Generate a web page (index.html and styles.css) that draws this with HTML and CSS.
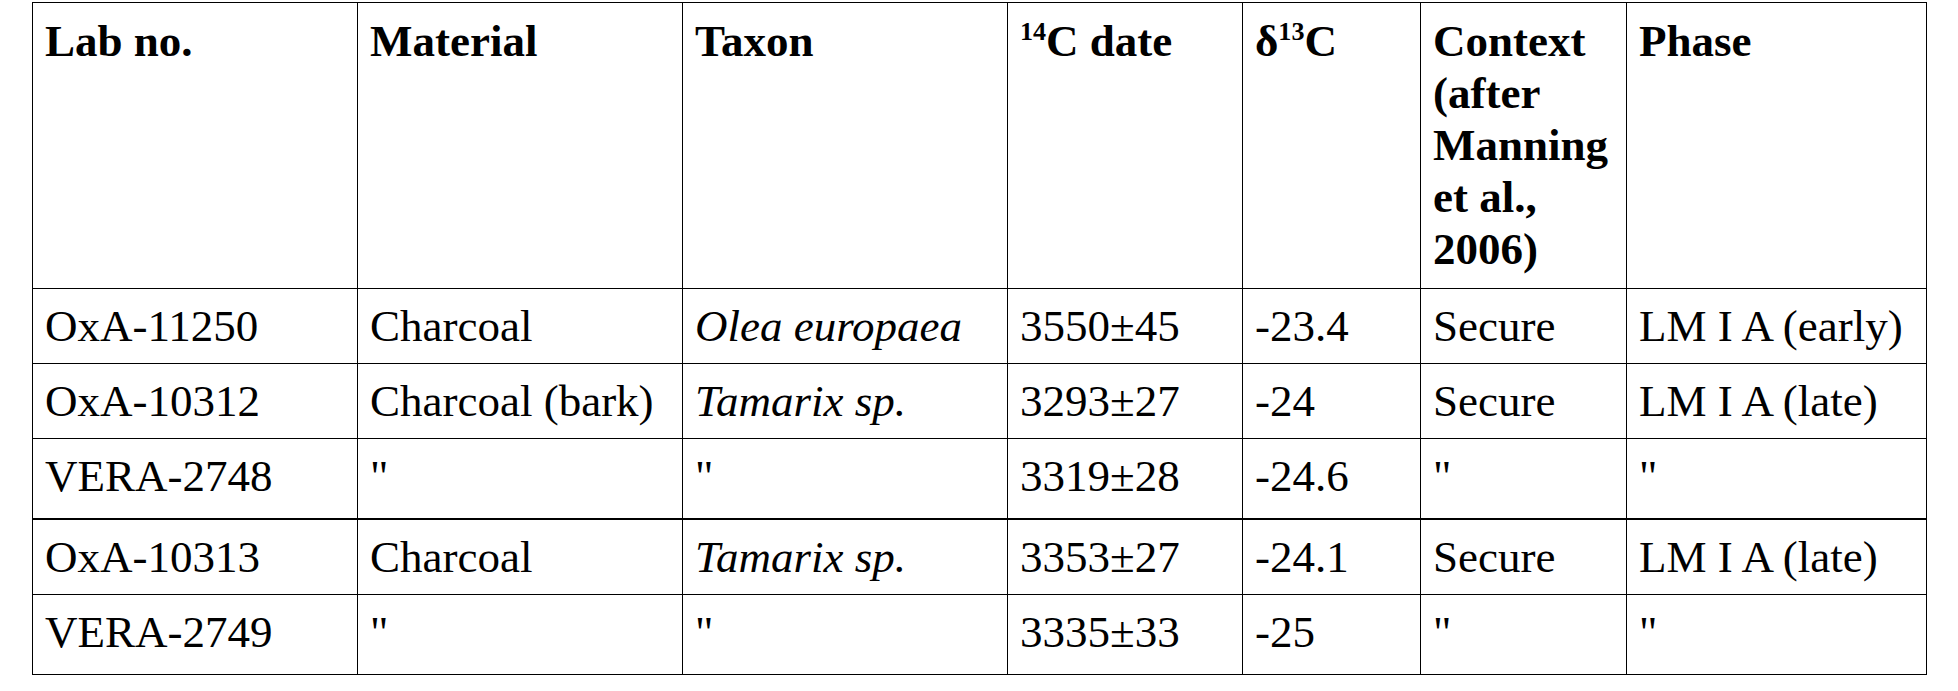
FILE: index.html
```html
<!DOCTYPE html>
<html lang="en">
<head>
    <meta charset="UTF-8">
    <meta name="viewport" content="width=device-width, initial-scale=1.0">
    <title>Radiocarbon dates</title>
    <link rel="stylesheet" href="styles.css">
</head>
<body>
    <div class="page">
        <table class="dates">
            <colgroup>
                <col class="col-lab">
                <col class="col-material">
                <col class="col-taxon">
                <col class="col-date">
                <col class="col-delta">
                <col class="col-context">
                <col class="col-phase">
            </colgroup>
            <thead>
                <tr>
                    <th>Lab no.</th>
                    <th>Material</th>
                    <th>Taxon</th>
                    <th><sup>14</sup>C date</th>
                    <th>&delta;<sup>13</sup>C</th>
                    <th>Context (after Manning et al., 2006)</th>
                    <th>Phase</th>
                </tr>
            </thead>
            <tbody>
                <tr>
                    <td>OxA-11250</td>
                    <td>Charcoal</td>
                    <td><i>Olea europaea</i></td>
                    <td>3550&plusmn;45</td>
                    <td>-23.4</td>
                    <td>Secure</td>
                    <td>LM I A (early)</td>
                </tr>
                <tr>
                    <td>OxA-10312</td>
                    <td>Charcoal (bark)</td>
                    <td><i>Tamarix sp.</i></td>
                    <td>3293&plusmn;27</td>
                    <td>-24</td>
                    <td>Secure</td>
                    <td>LM I A (late)</td>
                </tr>
                <tr class="ditto-row">
                    <td>VERA-2748</td>
                    <td>"</td>
                    <td>"</td>
                    <td>3319&plusmn;28</td>
                    <td>-24.6</td>
                    <td>"</td>
                    <td>"</td>
                </tr>
                <tr class="group-start">
                    <td>OxA-10313</td>
                    <td>Charcoal</td>
                    <td><i>Tamarix sp.</i></td>
                    <td>3353&plusmn;27</td>
                    <td>-24.1</td>
                    <td>Secure</td>
                    <td>LM I A (late)</td>
                </tr>
                <tr class="ditto-row">
                    <td>VERA-2749</td>
                    <td>"</td>
                    <td>"</td>
                    <td>3335&plusmn;33</td>
                    <td>-25</td>
                    <td>"</td>
                    <td>"</td>
                </tr>
            </tbody>
        </table>
    </div>
</body>
</html>
```

FILE: styles.css
```css
body {
    margin: 0;
    padding: 0;
    background: #fff;
    color: #000;
    font-family: "Liberation Serif", "Times New Roman", serif;
}

.page {
    padding: 2px 32px 0 32px;
}

.dates {
    border-collapse: collapse;
    table-layout: fixed;
    width: 1894px;
    font-size: 45px;
    line-height: 52px;
}

.col-lab { width: 325px; }
.col-material { width: 325px; }
.col-taxon { width: 325px; }
.col-date { width: 235px; }
.col-delta { width: 178px; }
.col-context { width: 206px; }
.col-phase { width: 300px; }

.dates th,
.dates td {
    border: 1px solid #000;
    padding: 11px 12px 11px 12px;
    text-align: left;
    vertical-align: top;
}

.dates th {
    font-weight: bold;
    padding-top: 12px;
    padding-bottom: 13px;
}

.dates sup {
    font-size: 0.58em;
    line-height: 0;
    vertical-align: 0.62em;
}

.ditto-row td {
    padding-bottom: 16px;
}

.group-start td {
    border-top: 2px solid #000;
}
```
